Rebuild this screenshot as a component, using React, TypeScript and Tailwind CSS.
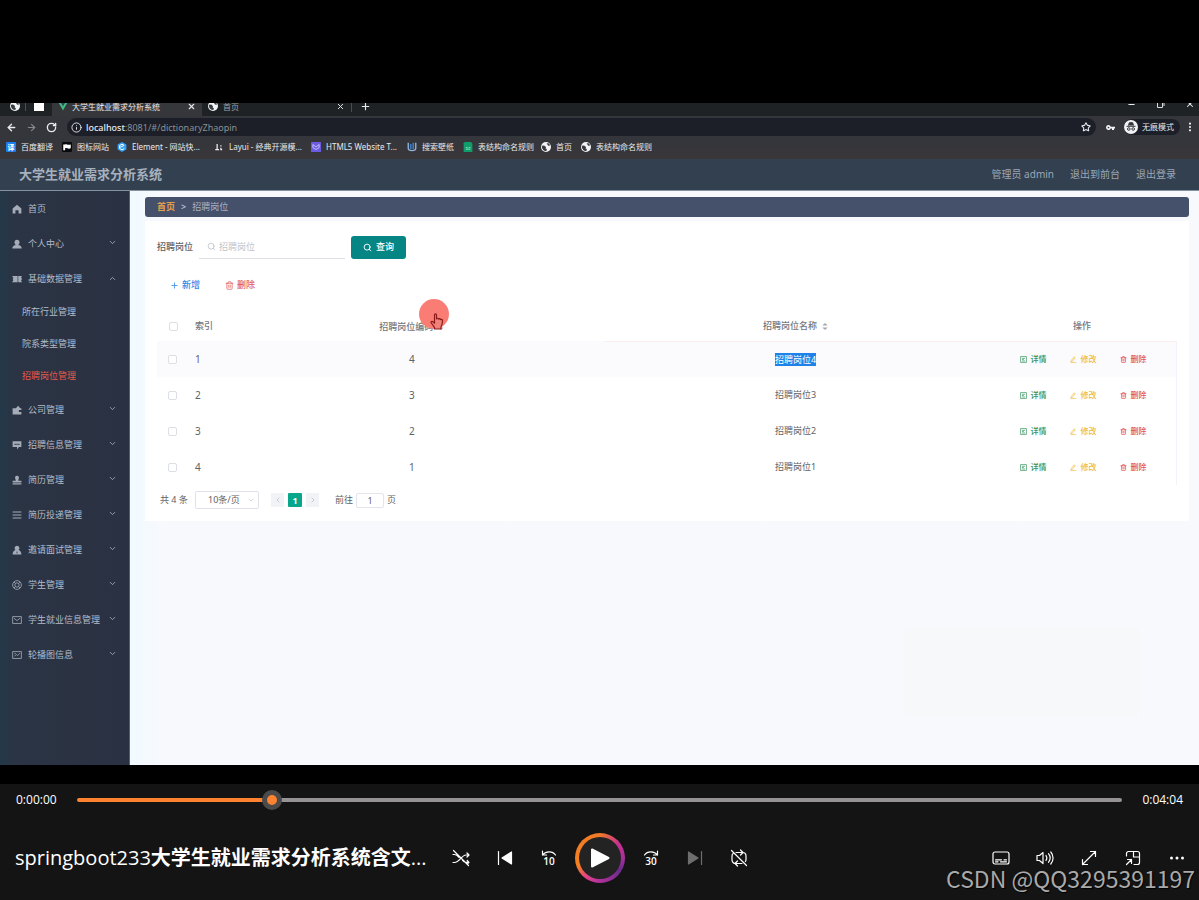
import React, { useState, ReactNode } from 'react';
import { Minus, Plus, X, Star, RotateCw, ArrowLeft, ArrowRight, Info, Search, ChevronDown, ChevronUp, ChevronLeft, ChevronRight, Trash2 } from 'lucide-react';

const cjk = "font-['Noto_Sans','Noto_Sans_CJK_SC',sans-serif]";

// ---------- Browser icons ----------

const GlobeIcon = () => (
  <svg viewBox="0 0 16 16" className="size-[10px] shrink-0">
    <circle cx="8" cy="8" r="8" fill="#f1f3f4" />
    <path d="M1.5 6 5 5.5l3 2.5-.5 2.5 2 1-1 3C4 14.500 1 11 1.500 6zM8.500 2l2 .5-.5 2 2 1.500 2.500-.5C14 3 11.500 1 8.500 2z" fill="#3a3b3f" />
  </svg>
);

const bookmarkIcons: Record<string, ReactNode> = {
  fanyi: (
    <span className="flex size-[10px] items-center justify-center rounded-[1px] bg-[#1b7ff0] text-[7px] font-bold leading-none text-white">译</span>
  ),
  iconsite: (
    <svg viewBox="0 0 16 16" className="size-[10px]">
      <rect width="16" height="16" rx="2" fill="#08090b" />
      <path d="M2 4h3c2-1 4 1.500 9 0v6c-4 2-6-1-9 0v3H2z" fill="#fff" />
    </svg>
  ),
  element: (
    <svg viewBox="0 0 16 16" className="size-[10px]">
      <path d="M8 0l7 4v8l-7 4-7-4V4z" fill="#35a0f5" />
      <path d="M11.500 5.500 8 3.500l-4 2.300v4.400l4 2.300 3.500-2M5 8.500l6-3" fill="none" stroke="#fff" strokeWidth="1.600" />
    </svg>
  ),
  layui: (
    <svg viewBox="0 0 16 16" className="size-[10px]">
      <path d="M5 3v9H2M5 12h3M11 5v2M11 9v3h2" fill="none" stroke="#eee" strokeWidth="2" />
    </svg>
  ),
  html5: (
    <svg viewBox="0 0 16 16" className="size-[10px]">
      <rect width="16" height="16" rx="1" fill="#6a5be0" />
      <path d="M3 4l5 4 5-4v5l-5 3-5-3z" fill="none" stroke="#c9c3ff" strokeWidth="1.500" />
    </svg>
  ),
  wallpaper: (
    <svg viewBox="0 0 16 16" className="size-[10px]">
      <path d="M2 1v9c0 5 12 5 12 0V1" fill="none" stroke="#8fb4de" strokeWidth="2.200" />
      <path d="M6 3v8M10 1v10" stroke="#3d7cc4" strokeWidth="2.500" />
    </svg>
  ),
  sheet: (
    <svg viewBox="0 0 16 16" className="size-[10px]">
      <path d="M3 0h10l2 3v13H1V2z" fill="#0f9d6b" />
      <path d="M4.500 9h3M9 9h3M4.500 11.500h7" stroke="#8fdcbb" strokeWidth="1.500" />
    </svg>
  ),
  globe: <GlobeIcon />,
};

const bookmarks = [
  { icon: 'fanyi', label: '百度翻译', width: 'w-[56px]' },
  { icon: 'iconsite', label: '图标网站', width: 'w-[55px]' },
  { icon: 'element', label: 'Element - 网站快...', width: 'w-[97px]' },
  { icon: 'layui', label: 'Layui - 经典开源模...', width: 'w-[97px]' },
  { icon: 'html5', label: 'HTML5 Website T...', width: 'w-[96px]' },
  { icon: 'wallpaper', label: '搜索壁纸', width: 'w-[56px]' },
  { icon: 'sheet', label: '表结构命名规则', width: 'w-[78px]' },
  { icon: 'globe', label: '首页', width: 'w-[40px]' },
  { icon: 'globe', label: '表结构命名规则', width: 'w-[80px]' },
];

function BrowserChrome() {
  return (
    <div className="text-[8px] leading-none text-[#e8eaed]">
      {/* tab strip, its upper half is cut by the frame */}
      <div className="h-[13px] overflow-hidden bg-[#1e2225]">
        <div className="-mt-2 flex h-[22px] items-center">
          <div className="flex w-[26px] justify-center border-r border-[#4a4d52] pl-1"><GlobeIcon /></div>
          <div className="flex w-[26px] justify-center"><span className="h-2.5 w-[10px] bg-white" /></div>
          <div className="flex h-full w-[150px] items-center bg-[#36373b] pl-1.5 pr-1.5">
            <svg viewBox="0 0 16 16" className="mr-1 size-[10px]">
              <path d="M0 1h4l4 7 4-7h4L8 15z" fill="#41b883" />
              <path d="M4 1h2.500L8 3.500 9.500 1H12L8 8z" fill="#2c4a5e" />
            </svg>
            <span className="flex-1 whitespace-nowrap pt-0.5">大学生就业需求分析系统</span>
            <X className="size-[9px]" strokeWidth={3} />
          </div>
          <div className="flex h-3 w-[150px] items-center border-r border-[#4a4d52] pl-1.5 pr-1.5">
            <GlobeIcon />
            <span className="flex-1 pl-[5px] pt-0.5 text-[#9aa0a6]">首页</span>
            <X className="size-[9px]" strokeWidth={2.5} />
          </div>
          <Plus className="ml-2 size-[11px]" strokeWidth={2.5} />
          <div className="ml-auto flex items-center gap-5 pb-1 pr-1">
            <Minus className="size-[9px]" strokeWidth={3} />
            <svg viewBox="0 0 9 9" className="size-[9px]"><path d="M1.500 2.500h5v5h-5zM3 1h5v5" fill="none" stroke="#ddd" /></svg>
            <X className="size-[10px]" strokeWidth={2.500} />
          </div>
        </div>
      </div>
      {/* address bar */}
      <div className="flex h-[22px] items-center bg-[#34363b] pr-[7px]">
        <div className="flex w-[67px] items-center gap-[9px] pl-1.5">
          <ArrowLeft className="size-[11px]" strokeWidth={3} />
          <ArrowRight className="size-[11px] text-[#85888d]" strokeWidth={2.500} />
          <RotateCw className="size-[11px]" strokeWidth={3} />
        </div>
        <div className="flex h-[18px] flex-1 items-center rounded-full bg-[#1c1f27] pl-1 pr-[5px] text-[9px]">
          <Info className="mr-1 size-[11px]" />
          <span className="font-medium">localhost</span>
          <span className="flex-1 text-[#8b8f95]">:8081/#/dictionaryZhaopin</span>
          <Star className="size-[10px]" strokeWidth={2.500} />
        </div>
        <svg viewBox="0 0 18 10" className="ml-2.5 h-[5px] w-[9px]">
          <path d="M5 0a5 5 0 1 0 4.600 7H12v3h4V7h2V3.500H9.600A5 5 0 0 0 5 0zm0 3.300a1.700 1.700 0 1 1 0 3.400 1.700 1.700 0 0 1 0-3.400z" fill="#f1f3f4" fillRule="evenodd" />
        </svg>
        <div className="ml-[9px] flex h-4 w-[56px] items-center gap-1 rounded-full bg-[#1c1f27]">
          <svg viewBox="0 0 14 14" className="size-[14px]">
            <circle cx="7" cy="7" r="7" fill="#f1f3f4" />
            <path d="M4.500 5.500l.8-2.800h3.400l.8 2.800M2.500 6.300h9" stroke="#34363b" fill="#34363b" />
            <circle cx="4.800" cy="9" r="1.300" fill="none" stroke="#34363b" />
            <circle cx="9.200" cy="9" r="1.300" fill="none" stroke="#34363b" />
          </svg>
          <span>无痕模式</span>
        </div>
        <svg viewBox="0 0 4 12" className="ml-2 h-[10px] w-1" fill="#e8eaed">
          <circle cx="2" cy="2" r="1.300" /><circle cx="2" cy="6" r="1.300" /><circle cx="2" cy="10" r="1.300" />
        </svg>
      </div>
      <div className="flex h-[21px] items-center bg-gradient-to-b from-[#33363b] to-[#3a363a] pb-[3px] pl-1.5">
        {bookmarks.map((b, i) => (
          <a key={i} href="#" className={`${b.width} flex items-center gap-[5px] whitespace-nowrap`}>
            {bookmarkIcons[b.icon]}
            <span>{b.label}</span>
          </a>
        ))}
      </div>
    </div>
  );
}

// ---------- Sidebar ----------

const menuIcons: Record<string, ReactNode> = {
  home: <path d="M8 1 1 7v8h4.500v-5h5v5H15V7z" />,
  user: <path d="M8 1a4 4 0 0 1 4 4c0 2-1 4-2.500 4.500C13 10 15.500 11 15.500 15H.5C.5 11 3 10 6.500 9.500 5 9 4 7 4 5a4 4 0 0 1 4-4z" />,
  ticket: <path d="M0 3h9v10H0l2-2.500V9.500L1 8l1-1.500v-1zM10 3h6l-1.500 2.500L16 8l-1.500 2.500L16 13h-6z" />,
  wallet: <path d="M1 5h5l4-4 3 4h2v3h-4v3h4v4H1z" />,
  chat: <path fillRule="evenodd" d="M1 2h14v9h-4l-3 4v-4H1zM4 6v2h2V6zm3 0v2h2V6zm3 0v2h2V6z" />,
  stamp: <path d="M8 1c3 0 4 3 2.500 5.500L10 9h5v3H1V9h5l-.5-2.500C4 4 5 1 8 1zM1 13h14v2H1z" />,
  list: <path d="M1 2.500h14V4H1zM1 7.300h14v1.500H1zM1 12h14v1.500H1z" />,
  custom: <path d="M8 1a4 4 0 0 1 2.500 7C13 9 15 11 15 15H1c0-4 2-6 4.500-7A4 4 0 0 1 8 1zM8 9l-1 4h2z" />,
  help: (
    <g fill="none" stroke="currentColor" strokeWidth="1.300">
      <circle cx="8" cy="8" r="7" /><circle cx="8" cy="8" r="3.500" />
      <path d="M3 3l2.500 2.500M13 3l-2.500 2.500M3 13l2.500-2.500M13 13l-2.500-2.500" />
    </g>
  ),
  mail: <path fill="none" stroke="currentColor" strokeWidth="1.300" d="M1 2.500h14v11H1zM3 5l5 4 5-4" />,
  picture: <path fill="none" stroke="currentColor" strokeWidth="1.300" d="M1 2.500h14v11H1zM4 10l3-3 2 2 3.500-4M4 5.500h2" />,
};

const menu = [
  { icon: 'home', label: '首页', leaf: true },
  { icon: 'user', label: '个人中心' },
  { icon: 'ticket', label: '基础数据管理', children: ['所在行业管理', '院系类型管理', '招聘岗位管理'] },
  { icon: 'wallet', label: '公司管理' },
  { icon: 'chat', label: '招聘信息管理' },
  { icon: 'stamp', label: '简历管理' },
  { icon: 'list', label: '简历投递管理' },
  { icon: 'custom', label: '邀请面试管理' },
  { icon: 'help', label: '学生管理' },
  { icon: 'mail', label: '学生就业信息管理' },
  { icon: 'picture', label: '轮播图信息' },
];

function Sidebar() {
  return (
    <nav className="w-[130px] shrink-0 border-r border-[#56616e] bg-gradient-to-r from-[#223849] via-[#2b3444] via-10% to-[#2a3142] text-[9px] text-[#b4bcc8]">
      {menu.map(item => (
        <div key={item.label}>
          <a href="#" className="flex h-[35px] items-center pl-3 pr-3">
            <svg viewBox="0 0 16 16" fill="currentColor" className="mr-1.5 size-[10px] text-[#a3acb8]">{menuIcons[item.icon]}</svg>
            <span className="flex-1">{item.label}</span>
            {item.children && <ChevronUp className="size-[9px]" strokeWidth={2} />}
            {!item.children && !item.leaf && <ChevronDown className="mb-0.5 size-[9px]" strokeWidth={2} />}
          </a>
          {item.children?.map(child => (
            <a key={child} href="#" className={`flex h-8 items-center pl-[22px] ${child === '招聘岗位管理' ? 'text-[#e8584a]' : ''}`}>
              {child}
            </a>
          ))}
        </div>
      ))}
    </nav>
  );
}

// ---------- Table page ----------

const rows = [
  { index: 1, code: 4, name: '招聘岗位4' },
  { index: 2, code: 3, name: '招聘岗位3' },
  { index: 3, code: 2, name: '招聘岗位2' },
  { index: 4, code: 1, name: '招聘岗位1' },
];

const checkClasses = "block size-[9px] appearance-none rounded-[2px] border border-[#dcdfe6] bg-white";
const actionClasses = "flex w-[50px] items-center gap-1 text-[8px] font-medium";

const SortIcon = () => (
  <svg viewBox="0 0 6 10" className="inline-block h-[9px] w-[6px]" fill="#a4a8b0">
    <path d="M3 1l3 3H0zM3 9L0 6h6z" />
  </svg>
);

const DocIcon = () => (
  <svg viewBox="0 0 12 12" className="size-[7px]" fill="none" stroke="currentColor" strokeWidth="1.200">
    <path d="M1 1h10v10H1zM3.500 4h5M3.500 6h3M3.500 8.500h5" />
  </svg>
);

const EditIcon = () => (
  <svg viewBox="0 0 12 12" className="size-[7px]" fill="none" stroke="currentColor" strokeWidth="1.200">
    <path d="M2 8l5-6.500 2 1.500-5 6.500-2.500.5zM1 11.400h10" />
  </svg>
);

// highlighted pointer drawn by the screen recorder
const Pointer = () => (
  <svg viewBox="0 0 30 32" className="pointer-events-none absolute -right-[5px] -top-[21px] h-8 w-[30px]">
    <circle cx="15" cy="15" r="15" fill="#fa7d75" />
    <path d="M15.500 16v8l-2-1.500c-1-.5-2 .5-1.200 1.500l3.200 4.500v1.500h6.500V28c1-2 1.500-3 1.500-6.500 0-1.500-1.500-1.500-2-.5 0-1.500-1.500-1.800-2-.5 0-1.500-1.500-1.700-2-.3V16c0-1.500-2-1.500-2 0z" fill="#f0827a" stroke="#8c1a1a" strokeWidth="1.200" />
  </svg>
);

function ContentPage() {
  return (
    <main className="relative min-w-0 flex-1 bg-gradient-to-r from-[#f1faff] to-[#f7f9fd] to-3% pb-8 pl-[15px] pr-[10px] pt-1.5 text-[9px] text-[#606266]">
      <div className="flex h-5 items-center gap-1.5 rounded-[3px] bg-[#45506b] px-3 text-[#a9b3c4]">
        <a href="#" className="font-bold text-[#e3a04a]">首页</a>
        <span className="text-[#d5dae3]">&gt;</span>
        <span>招聘岗位</span>
      </div>

      <section className="mt-1 bg-white px-3 pb-1.5 pt-3.5">
        <form className="flex h-[24px] items-center">
          <label htmlFor="post" className="w-[42px] font-medium">招聘岗位</label>
          <div className="mr-1.5 flex h-full w-[146px] items-center gap-[3px] border-b border-[#dcdfe6] pl-2">
            <Search className="size-[9px] text-[#b8bcc6]" strokeWidth={2} />
            <input id="post" placeholder="招聘岗位" className="w-24 bg-transparent placeholder:text-[#c0c4cc]" />
          </div>
          <button type="button" className="flex h-[23px] w-[55px] items-center justify-center gap-1 rounded-[3px] bg-[#058584] font-medium text-white">
            <Search className="size-[9px]" strokeWidth={2.500} />
            查询
          </button>
        </form>

        <div className="flex h-[52px] items-center gap-[25px] pl-[13px] font-medium">
          <button className="flex items-center gap-[3px] text-[#2f86e8]"><Plus className="size-[9px]" strokeWidth={2} />新增</button>
          <button className="flex items-center gap-[3px] text-[#e25b5b]"><Trash2 className="size-[9px]" strokeWidth={2} />删除</button>
        </div>

        <table className="w-full table-fixed">
          <colgroup>
            <col className="w-[30px]" />
            <col className="w-[33px]" />
            <col />
            <col />
            <col className="w-[189px]" />
          </colgroup>
          <thead>
            <tr className="h-[30px] text-[#73767d]">
              <th className="p-0 pl-3"><input type="checkbox" aria-label="全选" className={checkClasses} /></th>
              <th className="whitespace-nowrap p-0 pl-2 text-left font-medium">索引</th>
              <th className="p-0 font-medium">
                <span className="relative inline-flex items-center gap-[5px] align-middle">招聘岗位编码<SortIcon /><Pointer /></span>
              </th>
              <th className="border-b border-[#fdeeee] p-0 font-medium">
                <span className="inline-flex items-center gap-[5px] align-middle">招聘岗位名称<SortIcon /></span>
              </th>
              <th className="border-b border-[#fdeeee] p-0 font-medium">操作</th>
            </tr>
          </thead>
          <tbody>
            {rows.map(row => (
              <tr key={row.index} className={`h-9 ${row.index === 1 ? 'bg-[#fbfbfe]' : ''}`}>
                <td className="p-0 pl-[11px]"><input type="checkbox" aria-label={`选择 ${row.index}`} className={checkClasses} /></td>
                <td className="p-0 pl-2 text-[10px]">{row.index}</td>
                <td className="p-0 text-center text-[10px]">{row.code}</td>
                <td className="p-0 text-center">
                  <span className={row.index === 1 ? 'inline-block bg-[#1e82e8] text-white' : ''}>{row.name}</span>
                </td>
                <td className="border-r border-[#f3f4fa] p-0 pl-8">
                  <div className="flex">
                    <button className={`${actionClasses} text-[#35925c]`}><DocIcon />详情</button>
                    <button className={`${actionClasses} text-[#efb93c]`}><EditIcon />修改</button>
                    <button className={`${actionClasses} text-[#e0565a]`}><Trash2 className="size-[7px]" strokeWidth={2.500} />删除</button>
                  </div>
                </td>
              </tr>
            ))}
          </tbody>
        </table>

        <div className="flex h-[30px] items-center pl-[3px]">
          <span className="w-[35px]">共 4 条</span>
          <div className="relative mr-3 w-16">
            <select aria-label="每页条数" className="h-[18px] w-full appearance-none rounded-[2px] border border-[#dfe2e9] bg-white pl-3">
              <option>10条/页</option>
            </select>
            <ChevronDown className="absolute right-1 top-[5px] size-[8px] text-[#c0c4cc]" />
          </div>
          <div className="mr-4 flex gap-1">
            <button aria-label="上一页" className="flex h-[14px] w-[13px] items-center justify-center rounded-[1px] bg-[#f2f3f7] text-[#b4b8c0]"><ChevronLeft className="size-[8px]" /></button>
            <button className="h-[14px] w-[14px] rounded-[1px] bg-[#06a78a] font-bold leading-none text-white">1</button>
            <button aria-label="下一页" className="flex h-[14px] w-[13px] items-center justify-center rounded-[1px] bg-[#f2f3f7] text-[#b4b8c0]"><ChevronRight className="size-[8px]" /></button>
          </div>
          <label htmlFor="page">前往</label>
          <input id="page" defaultValue="1" className="mx-[3px] h-[15px] w-7 rounded-[2px] border border-[#e2e5eb] text-center" />
          <span>页</span>
        </div>
      </section>

      {/* faded toast */}
      <div className="absolute bottom-[49px] right-[60px] h-[88px] w-[235px] bg-[#f6f8fa]" />
    </main>
  );
}

// ---------- Player ----------

const PlayerButton = ({ label, children }: { label: string; children: ReactNode }) => (
  <button aria-label={label} className="flex h-9 w-9 items-center justify-center text-white">
    <svg viewBox="0 0 18 18" className="size-[18px]" fill="none" stroke="currentColor" strokeWidth="1.200" strokeLinecap="round" strokeLinejoin="round">
      {children}
    </svg>
  </button>
);

function Player() {
  const [position, setPosition] = useState(18);

  return (
    <footer className="relative bg-[#141414] font-['Open_Sans','Noto_Sans_CJK_SC',sans-serif] text-white">
      <div className="flex h-8 items-center px-4 text-[12px]">
        <span className="w-[61px]">0:00:00</span>
        <input
          type="range"
          aria-label="进度"
          min="0"
          max="100"
          value={position}
          onChange={e => setPosition(Number(e.target.value))}
          style={{ backgroundImage: `linear-gradient(to right, #ff8230 ${position}%, #969394 ${position}%)` }}
          className="h-1 min-w-0 flex-1 appearance-none rounded-full [&::-webkit-slider-thumb]:size-5 [&::-webkit-slider-thumb]:appearance-none [&::-webkit-slider-thumb]:rounded-full [&::-webkit-slider-thumb]:border-[5px] [&::-webkit-slider-thumb]:border-solid [&::-webkit-slider-thumb]:border-[#4a4a4a] [&::-webkit-slider-thumb]:bg-[#ff8230]"
        />
        <span className="w-[61px] text-right">0:04:04</span>
      </div>

      <div className="grid h-[84px] grid-cols-[1fr_auto_1fr] items-center">
        <h2 className="truncate pl-[15px] text-[20px] font-bold">
          <span className="font-medium">springboot233</span>大学生就业需求分析系统含文<span className="font-normal">...</span>
        </h2>
        <div className="flex items-center gap-2">
          <PlayerButton label="随机播放">
            <path d="M1 13.500h1.500c5 0 7-7.500 11.500-7.500h3M15 4l2 2-2 2M1 5.500h1.500c2 0 3.200 1.200 4.500 3M10.500 11.500c1 1.300 2 1.800 3.500 1.800h3M15.200 11.500l1.800 1.800-1.500 1.500M1.500 1.500l15 15" />
          </PlayerButton>
          <PlayerButton label="上一个">
            <path d="M2.500 2.500v13" />
            <path d="M15.500 3v12L6 9z" fill="currentColor" />
          </PlayerButton>
          <PlayerButton label="后退 10 秒">
            <path d="M2.500 2v4h4M2.500 6c3-4 10-4.500 13 0" />
            <text x="9" y="16" textAnchor="middle" fontSize="10" fill="currentColor" stroke="none" fontWeight="600">10</text>
          </PlayerButton>
          <button aria-label="播放" className="flex size-[50px] items-center justify-center rounded-full bg-[conic-gradient(from_0deg,#f07a28_0deg,#c8328c_50deg,#a8309a_90deg,#6a2c8c_120deg,#b0309c_180deg,#e0408a_215deg,#f58020_250deg,#f07a28_360deg)]">
            <span className="flex size-[42px] items-center justify-center rounded-full bg-[#232323]">
              <svg viewBox="0 0 20 20" className="size-5" fill="#fff" stroke="#fff" strokeWidth="2" strokeLinejoin="round">
                <path d="M2 1.500v17L18.500 10z" />
              </svg>
            </span>
          </button>
          <PlayerButton label="前进 30 秒">
            <path d="M15.500 2v4h-4M15.500 6c-3-4-10-4.500-13 0" />
            <text x="9" y="16" textAnchor="middle" fontSize="10" fill="currentColor" stroke="none" fontWeight="600">30</text>
          </PlayerButton>
          <PlayerButton label="下一个">
            <g className="text-[#6e6e6e]" stroke="currentColor">
              <path d="M15.500 2.500v13" />
              <path d="M2.500 3v12L12 9z" fill="currentColor" />
            </g>
          </PlayerButton>
          <PlayerButton label="循环播放">
            <path d="M6 3.500h6.500a3.500 3.500 0 0 1 3.500 3.500v3.500c0 .8-.2 1.400-.6 2M10.500 1l2.500 2.500L10.500 6M12 14.500H5.500A3.500 3.500 0 0 1 2 11V7c0-1 .5-2 1.200-2.600M7.500 12 5 14.500 7.500 17M1.500 1.500l15 15" />
          </PlayerButton>
        </div>
        <div className="flex items-center justify-end gap-2 pr-1">
          <PlayerButton label="字幕">
            <rect x="1" y="3" width="16" height="12" rx="2" />
            <path d="M3.500 10.800h6M12 10.800h2.500M3.500 12.800h2.500M8.500 12.800h6" />
          </PlayerButton>
          <PlayerButton label="音量">
            <path d="M1 6.500v5h2.500L7 14.500v-11L3.500 6.500zM10 6.500c1 1.500 1 3.500 0 5M12.500 4.700c2 2.500 2 6 0 8.600M14.800 3c3 3.500 3 8.500 0 12" />
          </PlayerButton>
          <PlayerButton label="全屏">
            <path d="M2.500 15.500 15.500 2.500M10.500 2.500h5v5M2.500 10.500v5h5" />
          </PlayerButton>
          <PlayerButton label="迷你播放">
            <path d="M2.500 7V4.500a2 2 0 0 1 2-2h9a2 2 0 0 1 2 2v9a2 2 0 0 1-2 2H10M9.500 2.500V8h6M2.500 15.500l5-5M3.500 10.500h4v4" />
          </PlayerButton>
          <PlayerButton label="更多">
            <g fill="currentColor" stroke="none"><circle cx="3.500" cy="9" r="1.500" /><circle cx="9" cy="9" r="1.500" /><circle cx="14.500" cy="9" r="1.500" /></g>
          </PlayerButton>
        </div>
      </div>
      <span className="pointer-events-none absolute bottom-1.5 right-1 font-['Noto_Sans_CJK_SC',sans-serif] text-[23px] leading-8 text-[#a9a9a9] [text-shadow:1px_1px_1px_#000]">
        CSDN @QQ3295391197
      </span>
    </footer>
  );
}

export default function App() {
  return (
    <div className={`${cjk} flex min-h-screen flex-col bg-black pt-[103px]`}>
      <div className="mb-[19px] flex flex-1 flex-col overflow-hidden">
        <BrowserChrome />
        <header className="flex h-8 items-center justify-between border-b border-[#8493a0] bg-[#33404f] pl-[19px] pr-[23px] text-[10px] text-[#9ba7b6]">
          <h1 className="text-[13px] font-bold text-[#a7b1be]">大学生就业需求分析系统</h1>
          <div className="flex gap-4">
            <span>管理员 admin</span>
            <a href="#">退出到前台</a>
            <a href="#">退出登录</a>
          </div>
        </header>
        <div className="flex flex-1">
          <Sidebar />
          <ContentPage />
        </div>
      </div>
      <Player />
    </div>
  );
}
